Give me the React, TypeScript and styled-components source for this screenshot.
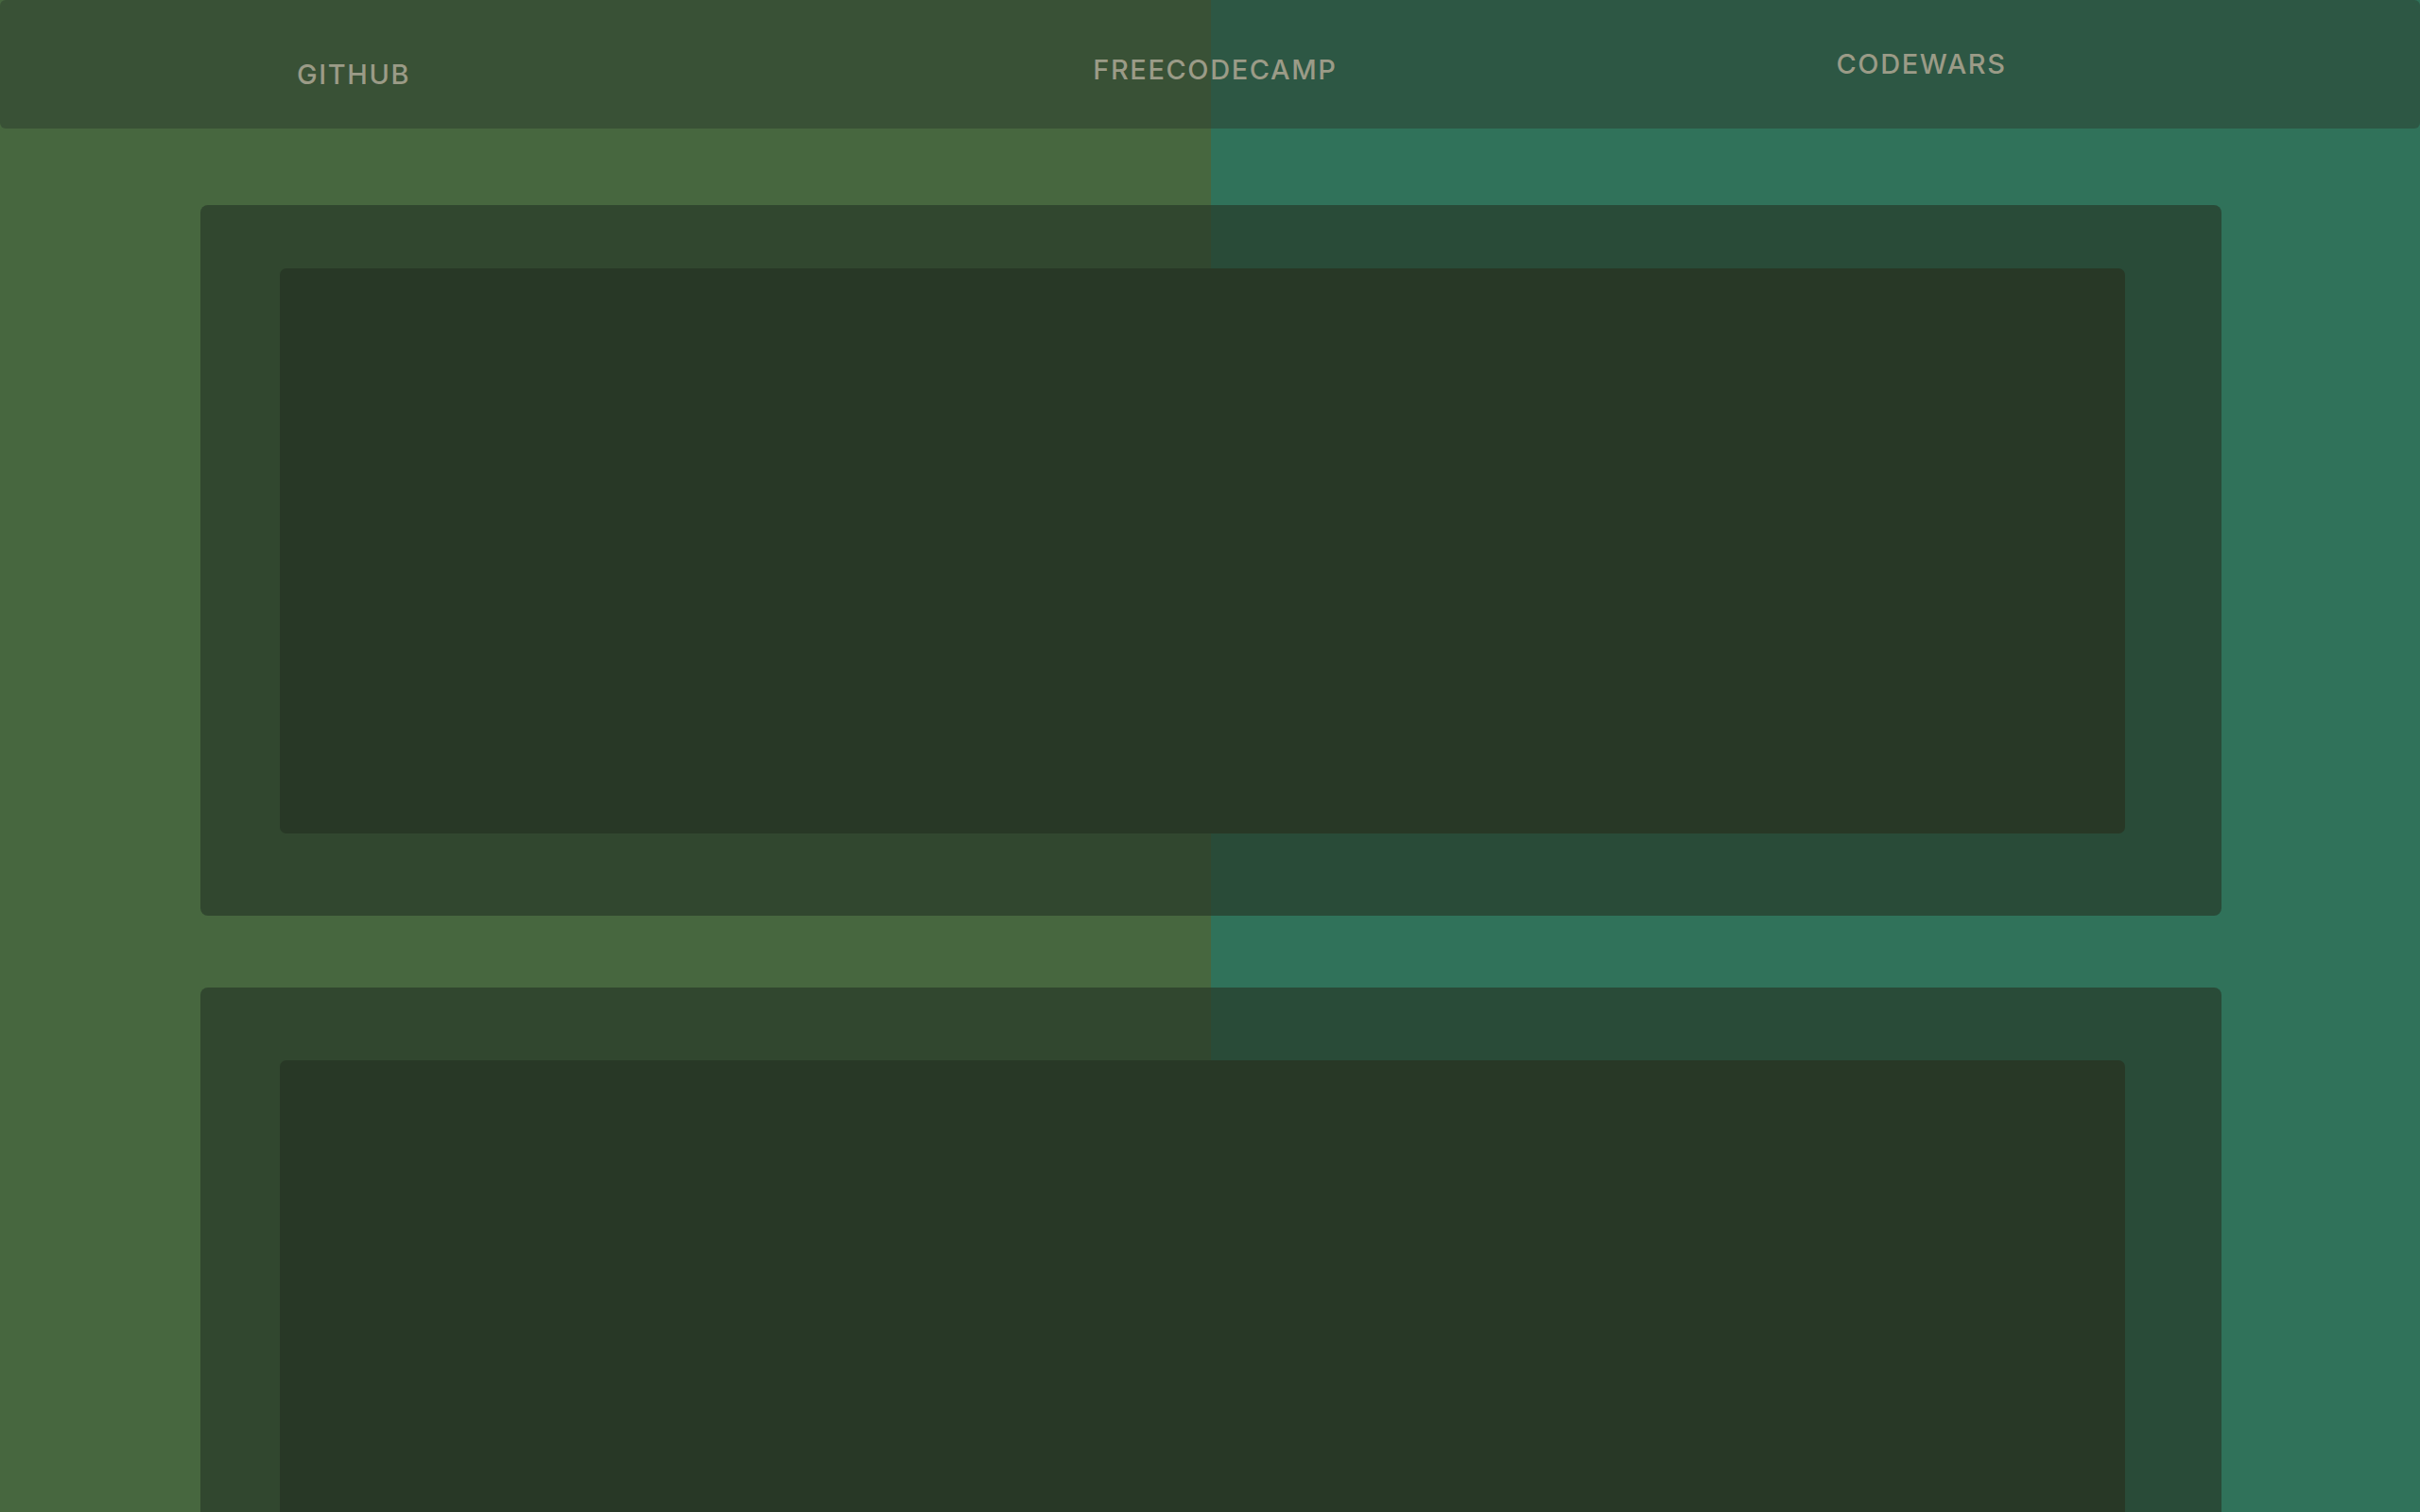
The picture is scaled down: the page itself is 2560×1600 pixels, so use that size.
import React from "react";
import styled, { createGlobalStyle } from "styled-components";

const GlobalStyle = createGlobalStyle`
  html, body {
    margin: 0;
    padding: 0;
  }
  body {
    min-height: 100vh;
    background: linear-gradient(90deg, #47673f 0, #47673f 1281px, #30725a 1281px, #30725a 100%);
    font-family: Inter, "Noto Sans", "Liberation Sans", sans-serif;
    overflow: hidden;
  }
`;

const Header = styled.header`
  height: 136px;
  display: flex;
  align-items: flex-start;
  background: rgba(43, 58, 44, 0.47);
  border-radius: 6px;
`;

const NavLink = styled.a<{ $gap: number; $top: number }>`
  display: block;
  margin-left: ${(p) => p.$gap}px;
  margin-top: ${(p) => p.$top}px;
  font-size: 29px;
  line-height: 36px;
  font-weight: 500;
  letter-spacing: 1.6px;
  color: #9b9b87;
  text-decoration: none;
  text-transform: uppercase;
  white-space: nowrap;
  cursor: pointer;
`;

const Main = styled.main`
  display: flex;
  flex-direction: column;
  gap: 76px;
  padding: 81px 210px 0 212px;
`;

const Card = styled.section<{ $padTop: number }>`
  background: rgba(38, 55, 39, 0.66);
  border-radius: 8px;
  padding: ${(p) => p.$padTop}px 102px 87px 84px;
`;

const Panel = styled.div`
  height: 598px;
  background: #283826;
  border-radius: 7px;
`;

export default function App() {
  return (
    <>
      <GlobalStyle />
      <Header>
        <NavLink $gap={314} $top={61}>GitHub</NavLink>
        <NavLink $gap={722} $top={56}>freeCodeCamp</NavLink>
        <NavLink $gap={528} $top={50}>Codewars</NavLink>
      </Header>
      <Main>
        <Card $padTop={67}>
          <Panel />
        </Card>
        <Card $padTop={77}>
          <Panel />
        </Card>
      </Main>
    </>
  );
}
